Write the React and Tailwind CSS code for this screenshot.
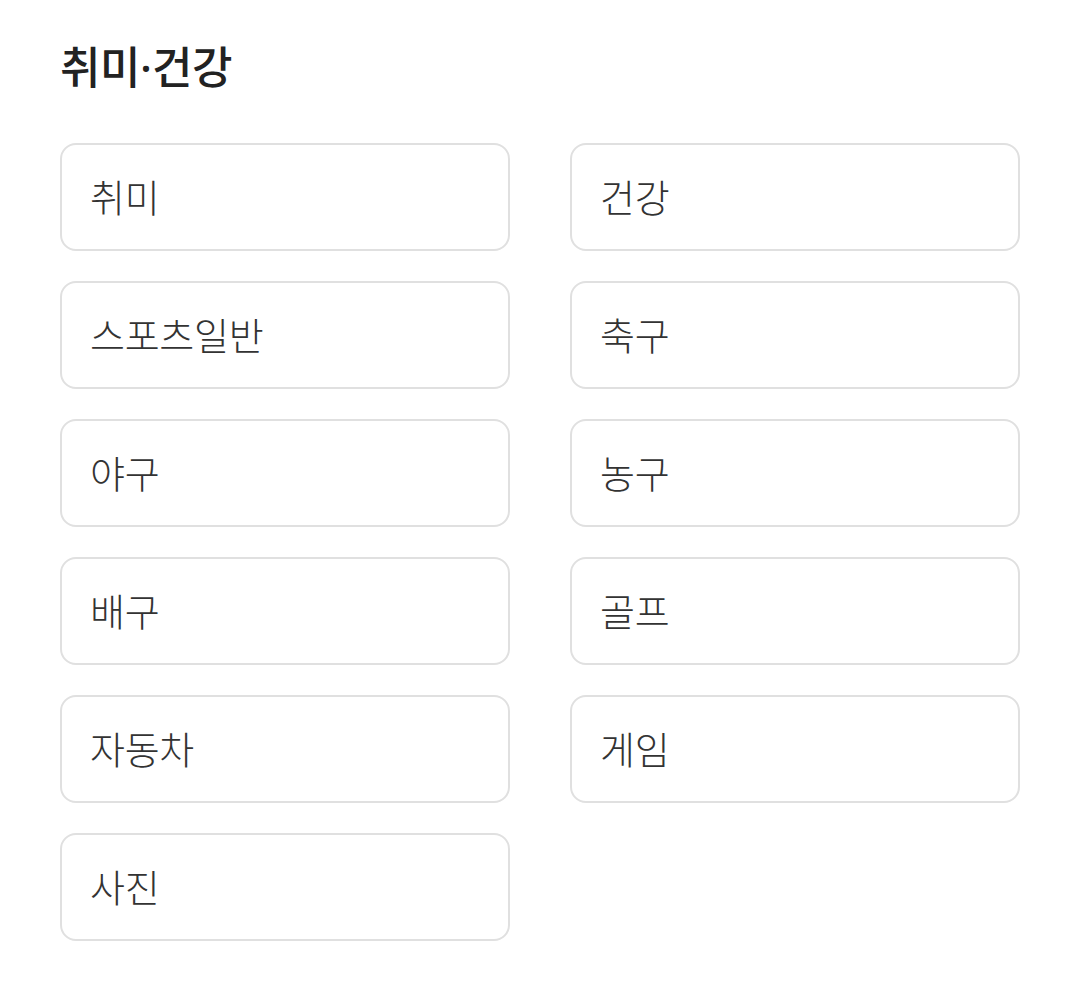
import React from "react";

const items = ["취미", "건강", "스포츠일반", "축구", "야구", "농구", "배구", "골프", "자동차", "게임", "사진"];

export default function App() {
  return (
    <div
      className="min-h-[1003px] bg-white px-[60px] pt-[37px]"
      style={{ fontFamily: '"Noto Sans CJK KR", "Noto Sans", sans-serif' }}
    >
      <h1 className="h-[56px] text-[44px] font-medium leading-[56px] tracking-[-0.5px] text-[#222]">
        취미<span className="font-['Noto_Sans'] tracking-normal">·</span>건강
      </h1>
      <div className="mt-[50px] grid grid-cols-2 gap-x-[60px] gap-y-[30px]">
        {items.map((t) => (
          <div
            key={t}
            className="flex h-[108px] items-center rounded-[16px] border-2 border-[#e0e0e0] bg-white pb-[4px] pl-[28px] text-[38px] font-light tracking-[-0.3px] text-[#333]"
          >
            {t}
          </div>
        ))}
      </div>
    </div>
  );
}
